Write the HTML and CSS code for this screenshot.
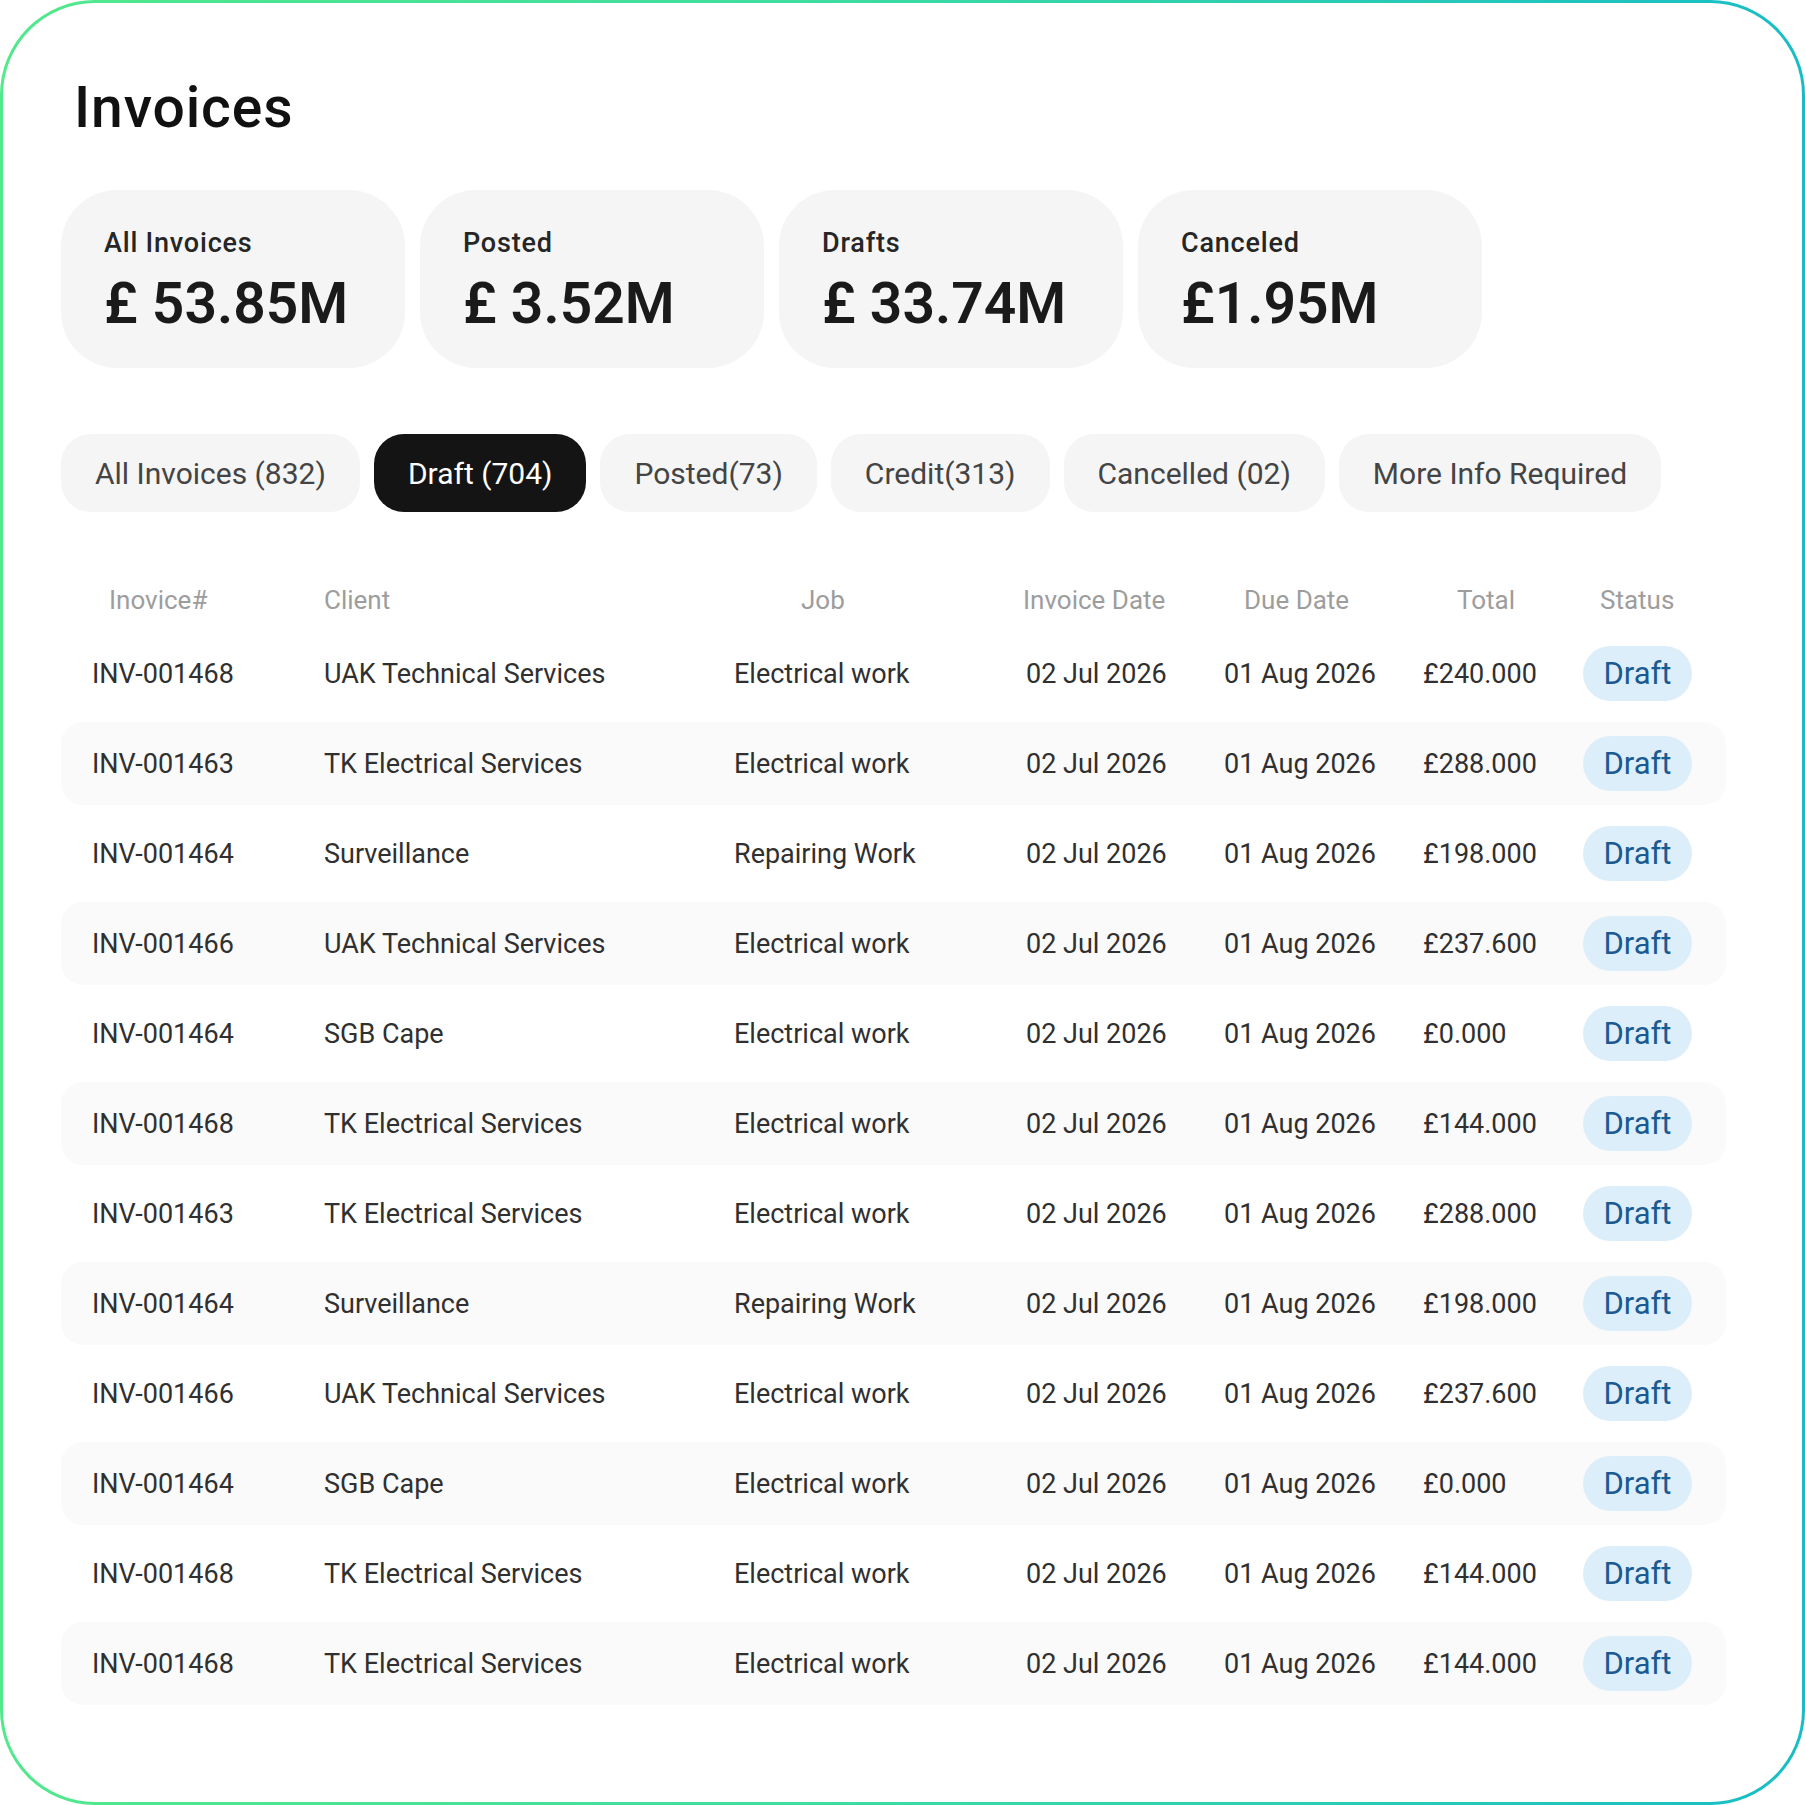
FILE: index.html
```html
<!DOCTYPE html>
<html lang="en">
<head>
	<meta charset="UTF-8">
	<title>Invoices</title>
	<link rel="stylesheet" href="styles.css">
</head>
<body>
	<div class="frame">
		<h1 class="title">Invoices</h1>

		<!-- totals -->
		<div class="stats">
			<div class="stat">
				<div class="stat-label">All Invoices</div>
				<div class="stat-value">£ 53.85M</div>
			</div>
			<div class="stat">
				<div class="stat-label">Posted</div>
				<div class="stat-value">£ 3.52M</div>
			</div>
			<div class="stat">
				<div class="stat-label">Drafts</div>
				<div class="stat-value">£ 33.74M</div>
			</div>
			<div class="stat">
				<div class="stat-label">Canceled</div>
				<div class="stat-value">£1.95M</div>
			</div>
		</div>

		<!-- filters -->
		<div class="tabs">
			<span class="tab">All Invoices (832)</span>
			<span class="tab tab-on">Draft (704)</span>
			<span class="tab">Posted(73)</span>
			<span class="tab">Credit(313)</span>
			<span class="tab">Cancelled (02)</span>
			<span class="tab">More Info Required</span>
		</div>

		<!-- list -->
		<div class="list">
			<div class="row head">
				<span class="h-no">Inovice#</span>
				<span>Client</span>
				<span class="h-job">Job</span>
				<span class="h-inv">Invoice Date</span>
				<span class="h-due">Due Date</span>
				<span class="h-total">Total</span>
				<span class="h-status">Status</span>
			</div>
			<div class="row">
				<span class="no">INV-001468</span><span>UAK Technical Services</span><span>Electrical work</span>
				<span>02 Jul 2026</span><span>01 Aug 2026</span><span>£240.000</span><span><b class="badge">Draft</b></span>
			</div>
			<div class="row striped">
				<span class="no">INV-001463</span><span>TK Electrical Services</span><span>Electrical work</span>
				<span>02 Jul 2026</span><span>01 Aug 2026</span><span>£288.000</span><span><b class="badge">Draft</b></span>
			</div>
			<div class="row">
				<span class="no">INV-001464</span><span>Surveillance</span><span>Repairing Work</span>
				<span>02 Jul 2026</span><span>01 Aug 2026</span><span>£198.000</span><span><b class="badge">Draft</b></span>
			</div>
			<div class="row striped">
				<span class="no">INV-001466</span><span>UAK Technical Services</span><span>Electrical work</span>
				<span>02 Jul 2026</span><span>01 Aug 2026</span><span>£237.600</span><span><b class="badge">Draft</b></span>
			</div>
			<div class="row">
				<span class="no">INV-001464</span><span>SGB Cape</span><span>Electrical work</span>
				<span>02 Jul 2026</span><span>01 Aug 2026</span><span>£0.000</span><span><b class="badge">Draft</b></span>
			</div>
			<div class="row striped">
				<span class="no">INV-001468</span><span>TK Electrical Services</span><span>Electrical work</span>
				<span>02 Jul 2026</span><span>01 Aug 2026</span><span>£144.000</span><span><b class="badge">Draft</b></span>
			</div>
			<div class="row">
				<span class="no">INV-001463</span><span>TK Electrical Services</span><span>Electrical work</span>
				<span>02 Jul 2026</span><span>01 Aug 2026</span><span>£288.000</span><span><b class="badge">Draft</b></span>
			</div>
			<div class="row striped">
				<span class="no">INV-001464</span><span>Surveillance</span><span>Repairing Work</span>
				<span>02 Jul 2026</span><span>01 Aug 2026</span><span>£198.000</span><span><b class="badge">Draft</b></span>
			</div>
			<div class="row">
				<span class="no">INV-001466</span><span>UAK Technical Services</span><span>Electrical work</span>
				<span>02 Jul 2026</span><span>01 Aug 2026</span><span>£237.600</span><span><b class="badge">Draft</b></span>
			</div>
			<div class="row striped">
				<span class="no">INV-001464</span><span>SGB Cape</span><span>Electrical work</span>
				<span>02 Jul 2026</span><span>01 Aug 2026</span><span>£0.000</span><span><b class="badge">Draft</b></span>
			</div>
			<div class="row">
				<span class="no">INV-001468</span><span>TK Electrical Services</span><span>Electrical work</span>
				<span>02 Jul 2026</span><span>01 Aug 2026</span><span>£144.000</span><span><b class="badge">Draft</b></span>
			</div>
			<div class="row striped">
				<span class="no">INV-001468</span><span>TK Electrical Services</span><span>Electrical work</span>
				<span>02 Jul 2026</span><span>01 Aug 2026</span><span>£144.000</span><span><b class="badge">Draft</b></span>
			</div>
		</div>
	</div>
</body>
</html>
```
FILE: styles.css
```css
*{
	padding: 0;
	margin: 0;
	box-sizing: border-box;
}
body{
	font-family: Roboto, "Liberation Sans", sans-serif;
	background: #fff;
	color: #2f2f2f;
}
/*outer frame with gradient border*/
.frame{
	width: 1805px;
	height: 1805px;
	border: 3px solid transparent;
	border-radius: 95px;
	background: linear-gradient(#fff, #fff) padding-box,
		linear-gradient(90deg, #52e88c, #3fdca0 45%, #17bdc6) border-box;
	padding: 73px 0 0 58px;
}
.title{
	font-size: 57px;
	line-height: 64px;
	font-weight: 500;
	letter-spacing: 0.9px;
	color: #111;
	margin-left: 13px;
}
/*totals*/
.stats{
	display: flex;
	gap: 15px;
	margin-top: 50px;
}
.stat{
	width: 344px;
	height: 178px;
	border-radius: 56px;
	background: #f5f5f5;
	padding: 38px 0 0 43px;
}
.stat-label{
	font-size: 27px;
	line-height: 30px;
	font-weight: 500;
	letter-spacing: 0.8px;
	color: #262626;
}
.stat-value{
	font-size: 57px;
	line-height: 64px;
	font-weight: 600;
	color: #1a1a1a;
	margin-top: 14px;
}
/*filters*/
.tabs{
	display: flex;
	gap: 14px;
	margin-top: 66px;
}
.tab{
	display: flex;
	align-items: center;
	height: 78px;
	padding: 0 34px;
	border-radius: 30px;
	background: #f5f5f5;
	font-size: 30px;
	color: #444;
}
.tab-on{
	background: #141414;
	color: #fff;
}
/*list*/
.list{
	display: flex;
	flex-direction: column;
	gap: 7px;
	width: 1665px;
	margin-top: 63px;
}
.row{
	display: grid;
	grid-template-columns: 263px 410px 292px 198px 199px 160px 143px;
	align-items: center;
	height: 83px;
	border-radius: 22px;
	font-size: 27px;
	color: #303030;
	white-space: nowrap;
}
.row .no{
	padding-left: 31px;
}
.striped{
	background: #fafafa;
}
.head{
	height: 50px;
	font-size: 26px;
	color: #9d9d9d;
}
.h-no{ padding-left: 48px; }
.h-job{ padding-left: 67px; }
.h-inv{ margin-left: -3px; }
.h-due{ padding-left: 20px; }
.h-total{ padding-left: 34px; }
.h-status{ padding-left: 17px; }
.badge{
	display: flex;
	align-items: center;
	justify-content: center;
	width: 109px;
	height: 55px;
	border-radius: 28px;
	background: #ddeefb;
	color: #1a5a90;
	font-size: 31px;
	font-weight: 400;
}
```
